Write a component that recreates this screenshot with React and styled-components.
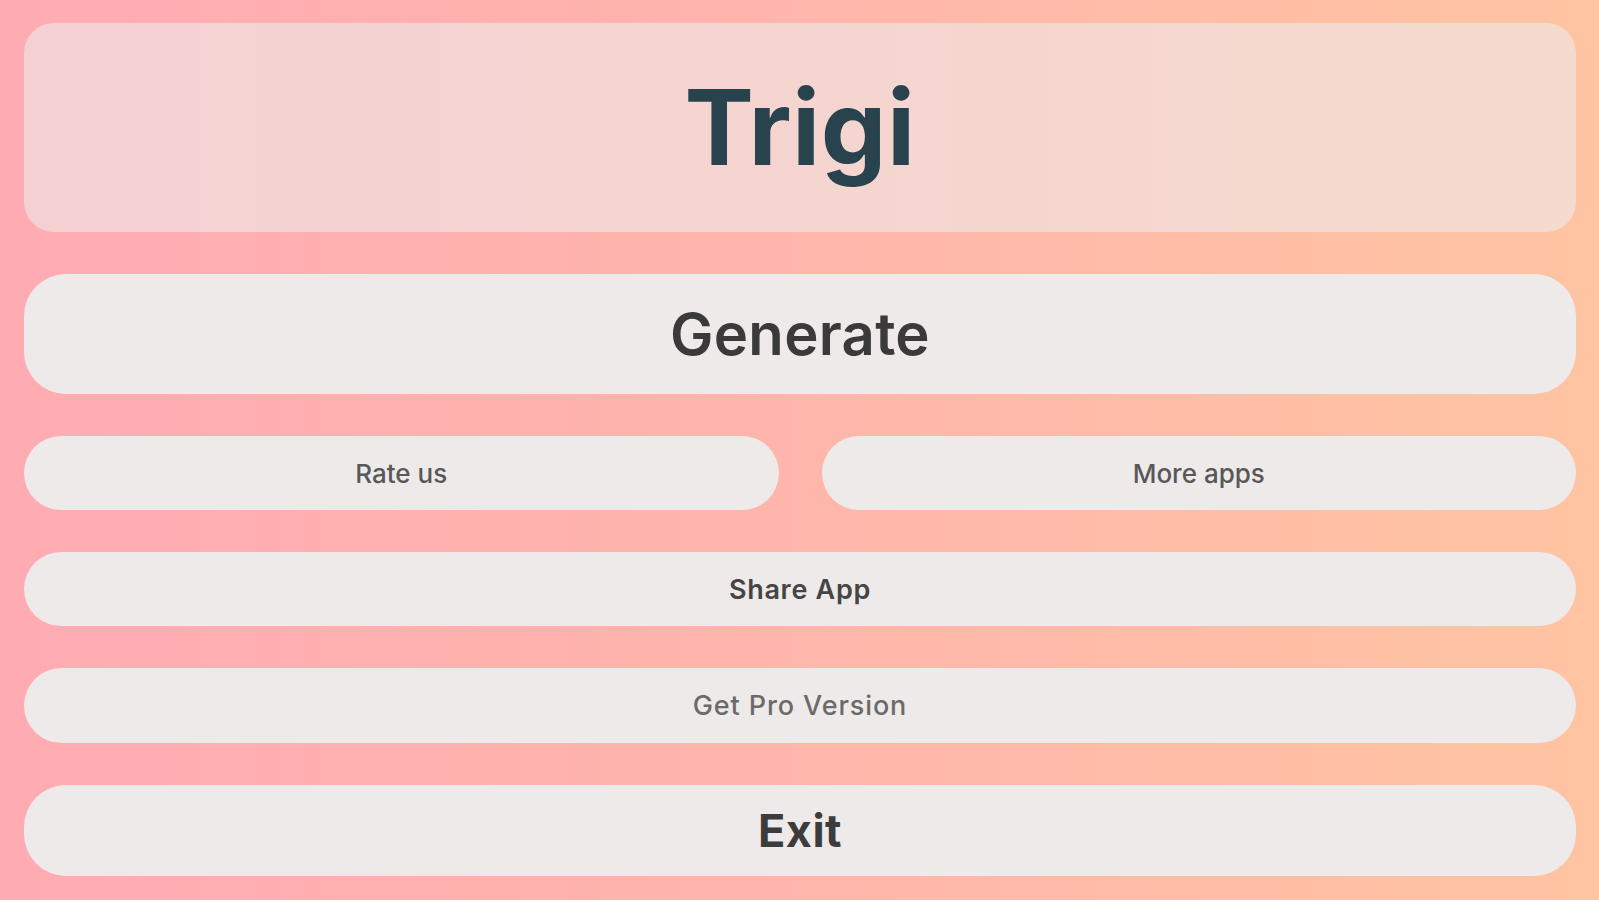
import React from "react";
import styled, { createGlobalStyle } from "styled-components";

const GlobalStyle = createGlobalStyle`
  html, body {
    margin: 0;
    padding: 0;
    height: 100%;
  }
  body {
    font-family: Inter, "Noto Sans", "Liberation Sans", sans-serif;
  }
  #root {
    height: 100%;
  }
`;

const Screen = styled.div`
  box-sizing: border-box;
  height: 900px;
  padding: 23px 23px 23px 24px;
  display: flex;
  flex-direction: column;
  gap: 42px;
  background: linear-gradient(90deg, #ffabb3 0%, #ffb4ac 45%, #ffbfa6 80%, #ffc4a2 100%);
`;

const Header = styled.div`
  height: 209px;
  flex: none;
  border-radius: 30px;
  background: rgba(238, 234, 233, 0.6);
  display: flex;
  align-items: center;
  justify-content: center;

  h1 {
    margin: 0;
    font-size: 104px;
    font-weight: 700;
    color: #28434e;
    letter-spacing: 0.5px;
    line-height: 1;
    transform: translateY(-1px);
  }
`;

const Row = styled.div`
  display: grid;
  grid-template-columns: 1fr 1fr;
  gap: 43px;
`;

const Button = styled.button`
  box-sizing: border-box;
  width: 100%;
  height: ${(p) => p.$h}px;
  flex: none;
  border: none;
  border-radius: ${(p) => p.$r || p.$h / 2}px;
  background: #eeeae9;
  color: ${(p) => p.$color || "#555"};
  font-family: Inter, "Noto Sans", "Liberation Sans", sans-serif;
  font-size: ${(p) => p.$size}px;
  font-weight: ${(p) => p.$weight || 500};
  letter-spacing: ${(p) => p.$ls || 0}px;
  display: flex;
  align-items: center;
  justify-content: center;
  padding: 0;
  cursor: pointer;
`;

export default function App() {
  return (
    <>
      <GlobalStyle />
      <Screen>
        <Header>
          <h1>Trigi</h1>
        </Header>
        <Button $h={120} $r={42} $size={58} $weight={600} $color="#3a3a3a" $ls={0.3}>
          Generate
        </Button>
        <Row>
          <Button $h={74} $size={26} $color="#585858">
            Rate us
          </Button>
          <Button $h={74} $size={26} $color="#585858">
            More apps
          </Button>
        </Row>
        <Button $h={74} $size={27} $weight={600} $color="#454545" $ls={0.7}>
          Share App
        </Button>
        <Button $h={75} $size={27} $color="#6a6a6a" $ls={0.9}>
          Get Pro Version
        </Button>
        <Button $h={91} $r={42} $size={45} $weight={700} $color="#3c3c3c" $ls={0.5}>
          Exit
        </Button>
      </Screen>
    </>
  );
}
